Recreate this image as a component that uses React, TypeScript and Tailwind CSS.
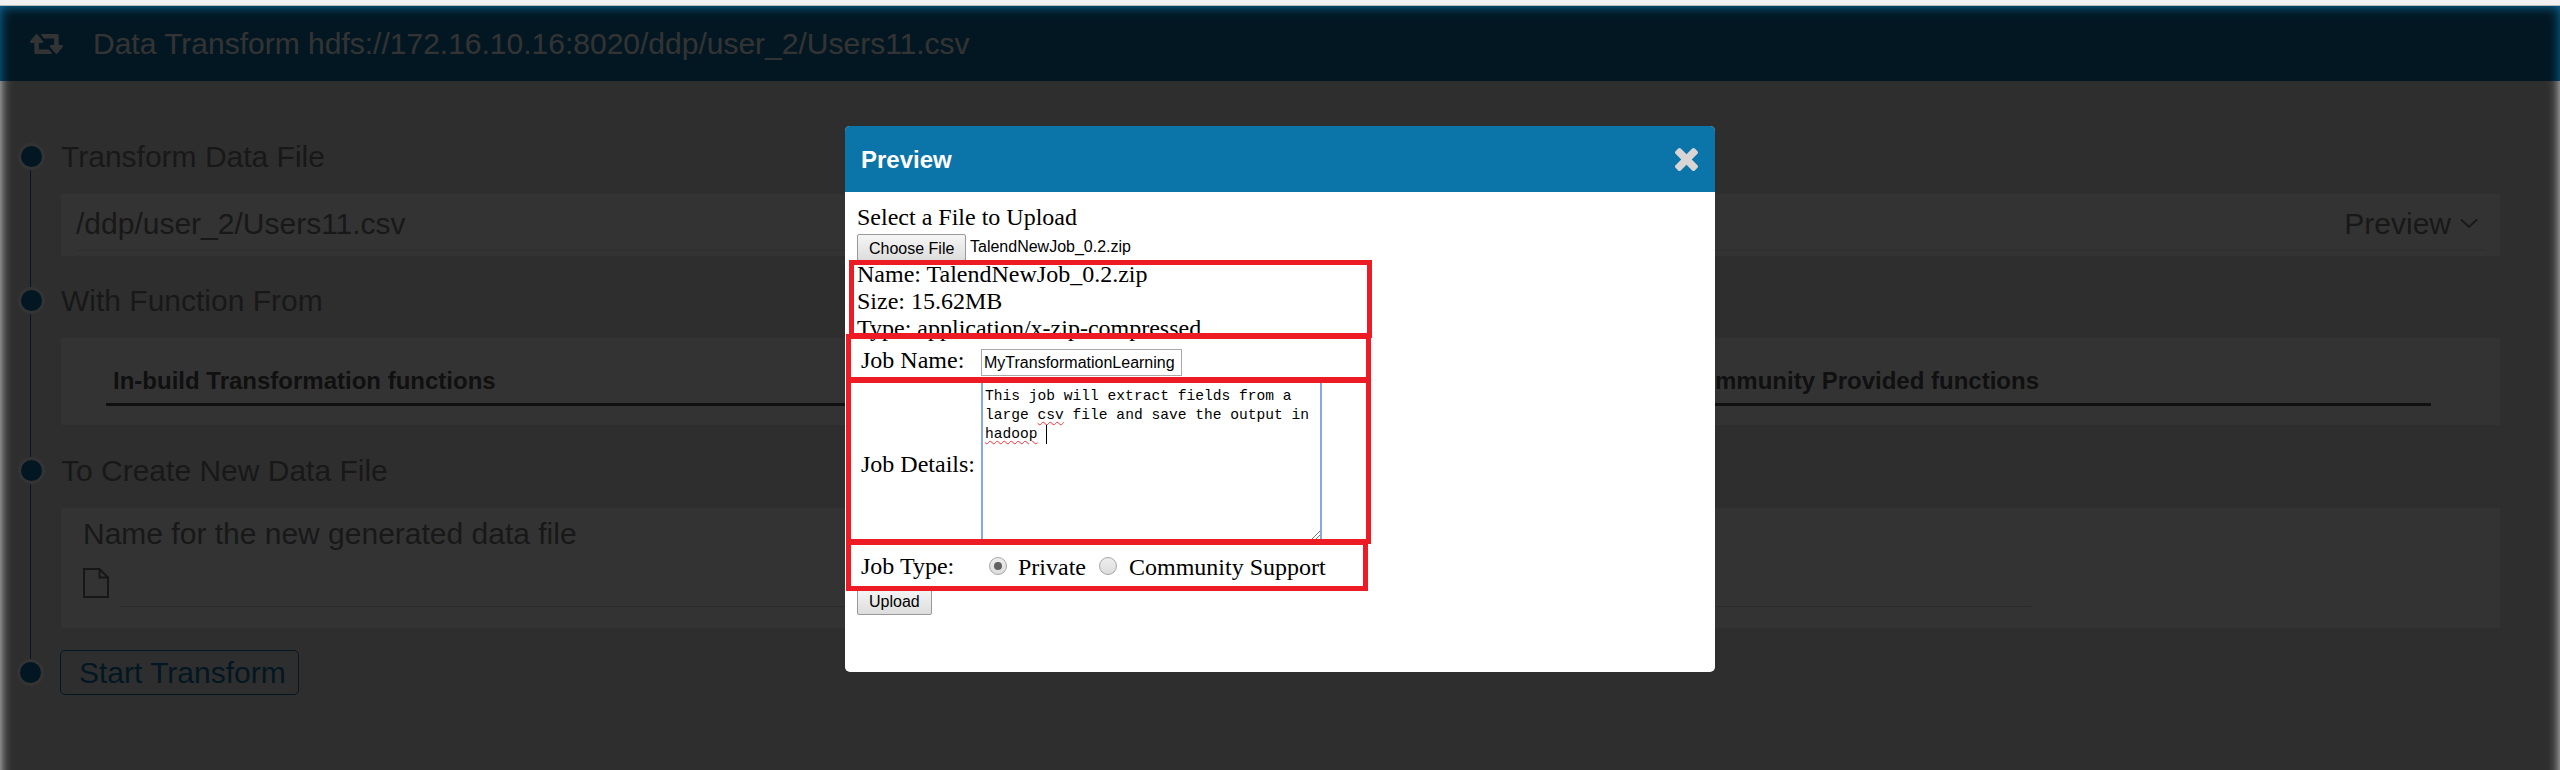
import type { ReactNode } from "react";

function RetweetIcon() {
  return (
    <svg viewBox="0 0 1920 1152" className="h-5 w-[33px] fill-white">
      <path d="M1280 1120q0 13-9.5 22.5t-22.5 9.5h-960q-8 0-13.5-2t-9-7-5.5-8-3-11.5-1-11.5v-600h-192q-26 0-45-19t-19-45q0-24 15-41l320-384q19-22 49-22t49 22l320 384q15 17 15 41 0 26-19 45t-45 19h-192v384h576q16 0 25 11l160 192q7 10 7 21zm640-416q0 24-15 41l-320 384q-20 23-49 23t-49-23l-320-384q-15-17-15-41 0-26 19-45t45-19h192v-384h-576q-16 0-25-12l-160-192q-7-9-7-20 0-13 9.5-22.5t22.5-9.5h960q8 0 13.5 2t9 7 5.5 8 3 11.5 1 11.5v600h192q26 0 45 19t19 45z" />
    </svg>
  );
}

function CloseIcon() {
  return (
    <svg viewBox="302 366 1188 1188" className="size-[23px] fill-[#d9d5d5]">
      <path d="M1490 1322q0 40-28 68l-136 136q-28 28-68 28t-68-28l-294-294-294 294q-28 28-68 28t-68-28l-136-136q-28-28-28-68t28-68l294-294-294-294q-28-28-28-68t28-68l136-136q28-28 68-28t68 28l294 294 294-294q28-28 68-28t68 28l136 136q28 28 28 68t-28 68l-294 294 294 294q28 28 28 68z" />
    </svg>
  );
}

function Step({ size, last, children }: { size: string; last?: boolean; children: ReactNode }) {
  return (
    <section className={`flex ${size}`}>
      <div className={`flex w-[27px] shrink-0 flex-col ${last ? "ml-[17px] mr-4" : "ml-[18px] mr-4"}`}>
        <span className="size-[27px] shrink-0 rounded-full border-[3px] border-white bg-[#0b74a9]" />
        {!last && <span className="ml-3 w-px flex-1 bg-[#0b74a9]" />}
      </div>
      <div className="min-w-0 flex-1">{children}</div>
    </section>
  );
}

function StepTitle({ children }: { children: ReactNode }) {
  return (
    <div className="h-[51px]">
      <h2 className="relative -top-[3px] leading-[34px]">{children}</h2>
    </div>
  );
}

function Page() {
  return (
    <div className="h-full bg-[#e6e6e6] font-['Liberation_Sans',sans-serif] text-[30px] text-[#7a7a7a]">
      <header className="flex h-[75px] items-center bg-[#0b74a9] pl-[30px] text-white">
        <RetweetIcon />
        <h1 className="ml-[30px] leading-[34px]">
          Data Transform hdfs://172.16.10.16:8020/ddp/user_2/Users11.csv
        </h1>
      </header>
      <main className="pt-[62px] pr-[60px]">
        <Step size="h-36">
          <StepTitle>Transform Data File</StepTitle>
          <div className="h-[62px] bg-white px-[15px]">
            <div className="flex h-[57px] items-center justify-between border-b border-[#e6e6e6] pt-[3px] pr-[7px]">
              <span className="leading-[34px]">/ddp/user_2/Users11.csv</span>
              <span className="flex items-center gap-[9px] leading-[34px]">
                Preview
                <svg viewBox="0 0 18 11" className="h-[11px] w-[18px] fill-none stroke-[#7a7a7a] stroke-2">
                  <path d="M1 1.500l8 7.500 8-7.500" />
                </svg>
              </span>
            </div>
          </div>
        </Step>
        <Step size="h-[170px]">
          <StepTitle>With Function From</StepTitle>
          <div className="h-[87px] bg-white pl-[45px] pr-[69px]">
            <div className="grid h-[68px] grid-cols-[1570px_1fr] items-end border-b-[3px] border-[#505050] pb-[9px] pl-[7px] text-[24px] leading-[27px] font-bold text-[#505050]">
              <span>In-build Transformation functions</span>
              <span>Community Provided functions</span>
            </div>
          </div>
        </Step>
        <Step size="h-[202px]">
          <StepTitle>To Create New Data File</StepTitle>
          <div className="h-[120px] bg-white pt-[9px] pl-[22px]">
            <p className="leading-[34px]">Name for the new generated data file</p>
            <div className="mt-[15px] flex h-[41px]">
              <svg viewBox="0 0 26 30" className="mt-[2px] h-[30px] w-[26px] fill-none stroke-[#757575] stroke-2">
                <path d="M1 1h15.500l8.500 8.500v19.500h-24zM16.500 1v8.500h8.500" />
              </svg>
              <div className="ml-[9px] w-[1914px] rounded-[3px] border-b border-[#cccccc]" />
            </div>
          </div>
        </Step>
        <Step size="h-[60px]" last>
          <button className="-mt-[9px] flex h-[45px] w-[239px] items-center rounded-[5px] border border-[#0b74a9] pl-[18px] leading-[34px] text-[#0b74a9]">
            Start Transform
          </button>
        </Step>
      </main>
    </div>
  );
}

const buttonStyle =
  "border border-[#999] rounded-[2px] bg-linear-to-b from-[#f6f6f6] to-[#dddddd] px-[11px] font-['Liberation_Sans',sans-serif] text-[16px] text-black whitespace-nowrap";

function Radio({ checked }: { checked?: boolean }) {
  return (
    <span className="mb-[3px] flex size-[18px] items-center justify-center rounded-full border border-[#a6a6a6] bg-linear-to-b from-[#eeeeee] to-[#dcdcdc]">
      {checked && <span className="size-2 rounded-full bg-[#626262]" />}
    </span>
  );
}

function Misspelt({ children }: { children: ReactNode }) {
  return (
    <span className="underline decoration-red-500 decoration-wavy decoration-1 underline-offset-2">{children}</span>
  );
}

function Dialog() {
  return (
    <div className="relative h-[546px] w-[870px] overflow-hidden rounded-[5px] bg-white text-black">
      <div className="flex h-[66px] items-center justify-between bg-[#0b74a9] pr-[17px] pl-4">
        <h3 className="pt-[2px] font-['Liberation_Sans',sans-serif] text-[24px] font-bold text-white">Preview</h3>
        <CloseIcon />
      </div>
      <div className="pt-3 pl-3 font-['Liberation_Serif',serif] text-[24px] leading-[27px]">
        <p>Select a File to Upload</p>
        <div className="flex h-[30px] items-end">
          <button className={`${buttonStyle} h-[27px] w-[109px]`}>Choose File</button>
          <span className="ml-1 pb-px font-['Liberation_Sans',sans-serif] text-[16px]">TalendNewJob_0.2.zip</span>
        </div>
        <p>Name: TalendNewJob_0.2.zip</p>
        <p>Size: 15.62MB</p>
        <p>Type: application/x-zip-compressed</p>
        <div className="flex h-[37px] items-start pl-1">
          <label className="w-[120px] pt-[5px]">Job Name:</label>
          <div className="mt-[7px] h-[27px] w-[201px] border border-[#a9a9a9] pl-[2px] font-['Liberation_Sans',sans-serif] text-[16px] leading-[25px]">
            MyTransformationLearning
          </div>
        </div>
        <div className="flex h-[163px] items-center pl-1">
          <label className="w-[120px] shrink-0 pt-[7px]">Job Details:</label>
          <div className="relative h-[163px] w-[341px] border-x-2 border-[#85a9e4] pt-2 pl-[2px] font-['Liberation_Mono',monospace] text-[14.6px] leading-[19.2px] whitespace-nowrap">
            <div>This job will extract fields from a</div>
            <div>
              large <Misspelt>csv</Misspelt> file and save the output in
            </div>
            <div className="flex">
              <Misspelt>hadoop</Misspelt>
              <span className="ml-2 h-[19px] w-px bg-black" />
            </div>
            <svg viewBox="0 0 8 8" className="absolute right-0 bottom-[3px] size-2 stroke-[#777]">
              <path d="M0 8L8 0M4 8l4-4" />
            </svg>
          </div>
        </div>
        <div className="flex h-[46px] items-start pt-[11px] pl-1">
          <label className="w-32">Job Type:</label>
          <div className="mt-px flex items-center">
            <Radio checked />
            <span className="w-[92px] pl-[11px]">Private</span>
            <Radio />
            <span className="pl-3">Community Support</span>
          </div>
        </div>
        <button className={`${buttonStyle} flex h-[27px] w-[75px] items-center pb-px`}>Upload</button>
      </div>
      <div className="absolute top-[134px] left-1 h-[78px] w-[523px] border-[5px] border-[#ed1c24]" />
      <div className="absolute top-[208px] left-px h-12 w-[525px] border-[5px] border-[#ed1c24]" />
      <div className="absolute top-[252px] left-px h-[166px] w-[525px] border-[5px] border-[#ed1c24]" />
      <div className="absolute top-[414px] left-px h-[51px] w-[522px] border-[5px] border-[#ed1c24]" />
    </div>
  );
}

export default function App() {
  return (
    <div className="flex h-[770px] w-full flex-col overflow-hidden">
      <div className="h-[6px] shrink-0 border-b border-[#b4bcbc] bg-[#f1f1f1]" />
      <div className="relative h-[764px] overflow-hidden">
        <Page />
        <div className="absolute inset-x-0 top-0 -bottom-10 bg-black/80 blur-[6px]" />
        <div className="absolute inset-0 flex items-start justify-center pt-[120px]">
          <Dialog />
        </div>
      </div>
    </div>
  );
}
